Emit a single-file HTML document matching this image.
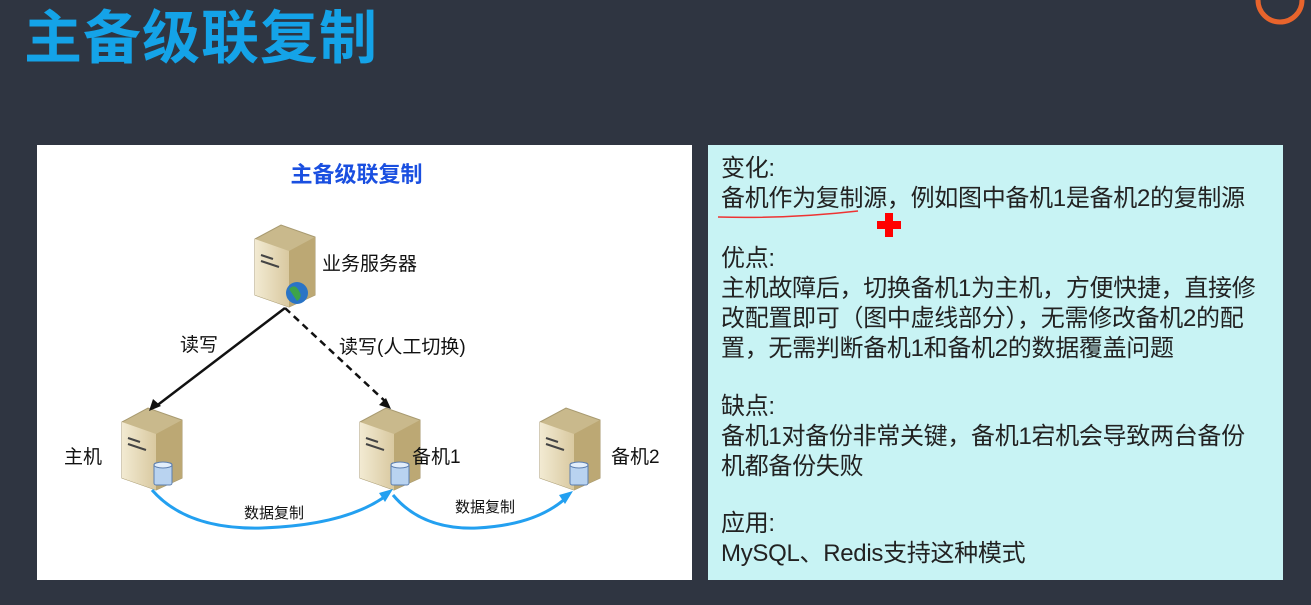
<!DOCTYPE html>
<html><head><meta charset="utf-8"><style>
body{margin:0;width:1311px;height:605px;background:#2f3541;overflow:hidden;position:relative;font-family:"Liberation Sans","Noto Sans CJK SC",sans-serif}
.t{position:absolute;left:24px;top:4px;font-size:58px;font-weight:bold;color:#14a3e8;letter-spacing:1px;line-height:70px}
.lp{position:absolute;left:37px;top:145px;width:655px;height:435px;background:#fff}
.rp{position:absolute;left:708px;top:145px;width:575px;height:435px;background:#c8f3f4}
.rp div{position:absolute;left:13px;font-size:24px;color:#222;line-height:30px;white-space:nowrap;letter-spacing:-0.3px}
.r{color:#d0201a}
.lab{position:absolute;font-size:19px;color:#111;white-space:nowrap}
</style></head><body>
<div class="t">主备级联复制</div>
<svg style="position:absolute;left:1250px;top:-20px" width="70" height="50"><circle cx="30" cy="20" r="22" fill="none" stroke="#e8642c" stroke-width="5"/></svg>
<div class="lp">
<div style="position:absolute;left:-8px;width:655px;top:12px;text-align:center;font-size:22px;font-weight:bold;color:#1a4fe0">主备级联复制</div>
<svg width="655" height="435" style="position:absolute;left:0;top:0">
<defs>
<linearGradient id="g" x1="0" x2="1"><stop offset="0" stop-color="#f2ead2"/><stop offset="1" stop-color="#d9c9a0"/></linearGradient>
<g id="srv"><path d="M0 14 L26 0 L60 12 L60 70 L34 82 L0 70Z" fill="#c9b98c" stroke="#a89a70"/><path d="M0 14 L34 26 L34 82 L0 70Z" fill="url(#g)"/><path d="M34 26 L60 12 L60 70 L34 82Z" fill="#bca874"/><path d="M6 30l12 4M6 36l18 6" stroke="#444" stroke-width="2"/></g>
<g id="db"><rect x="0" y="0" width="18" height="22" rx="2" fill="#b9d3f0" stroke="#5c7fb0"/><ellipse cx="9" cy="2" rx="9" ry="3" fill="#e2eefb" stroke="#5c7fb0"/></g>
</defs>
<use href="#srv" x="218" y="80"/>
<circle cx="260" cy="148" r="11" fill="#2a74c6"/><path d="M252 144q6-6 10 2q4 6-2 10" fill="#3da34a"/>
<use href="#srv" x="85" y="263"/><use href="#db" x="117" y="318"/>
<use href="#srv" x="323" y="263"/><use href="#db" x="354" y="318"/>
<use href="#srv" x="503" y="263"/><use href="#db" x="533" y="318"/>
<path d="M248 163 L118 262" stroke="#111" stroke-width="2.5"/><path d="M112 266l4-12 8 7z" fill="#111"/>
<path d="M248 163 L350 258" stroke="#111" stroke-width="2.5" stroke-dasharray="7 5"/><path d="M354 264l-12-4 7-7z" fill="#111"/>
<path d="M115 345 Q150 385 225 383 Q310 380 350 350" fill="none" stroke="#23a0f0" stroke-width="3"/><path d="M356 344l-14 4 6 9z" fill="#23a0f0"/>
<path d="M356 350 Q385 385 440 383 Q500 380 530 352" fill="none" stroke="#23a0f0" stroke-width="3"/><path d="M536 346l-14 4 6 9z" fill="#23a0f0"/>
</svg>
<div class="lab" style="left:285px;top:104px">业务服务器</div>
<div class="lab" style="left:143px;top:185px">读写</div>
<div class="lab" style="left:302px;top:187px">读写(人工切换)</div>
<div class="lab" style="left:27px;top:297px">主机</div>
<div class="lab" style="left:375px;top:297px">备机1</div>
<div class="lab" style="left:574px;top:297px">备机2</div>
<div class="lab" style="left:207px;top:357px;font-size:15px">数据复制</div>
<div class="lab" style="left:418px;top:351px;font-size:15px">数据复制</div>
</div>
<div class="rp">
<div class="r" style="top:9px">变化<span style="color:#222">:</span></div>
<div style="top:39px">备机作为复制源，例如图中备机1是备机2的复制源</div>
<svg style="position:absolute;left:0;top:60px" width="220" height="40"><path d="M10 12 Q80 14 150 6" stroke="#e33" stroke-width="1.5" fill="none"/><path d="M177 18h8v8h8v8h-8v8h-8v-8h-8v-8h8z" fill="#f00" transform="translate(0,-10)"/></svg>
<div class="r" style="top:99px">优点<span style="color:#222">:</span></div>
<div style="top:129px">主机故障后，切换备机1为主机，方便快捷，直接修</div>
<div style="top:159px">改配置即可（图中虚线部分），无需修改备机2的配</div>
<div style="top:189px">置，无需判断备机1和备机2的数据覆盖问题</div>
<div class="r" style="top:247px">缺点<span style="color:#222">:</span></div>
<div style="top:277px">备机1对备份非常关键，备机1宕机会导致两台备份</div>
<div style="top:307px">机都备份失败</div>
<div class="r" style="top:364px">应用<span style="color:#222">:</span></div>
<div style="top:394px">MySQL、Redis支持这种模式</div>
</div>
</body></html>
